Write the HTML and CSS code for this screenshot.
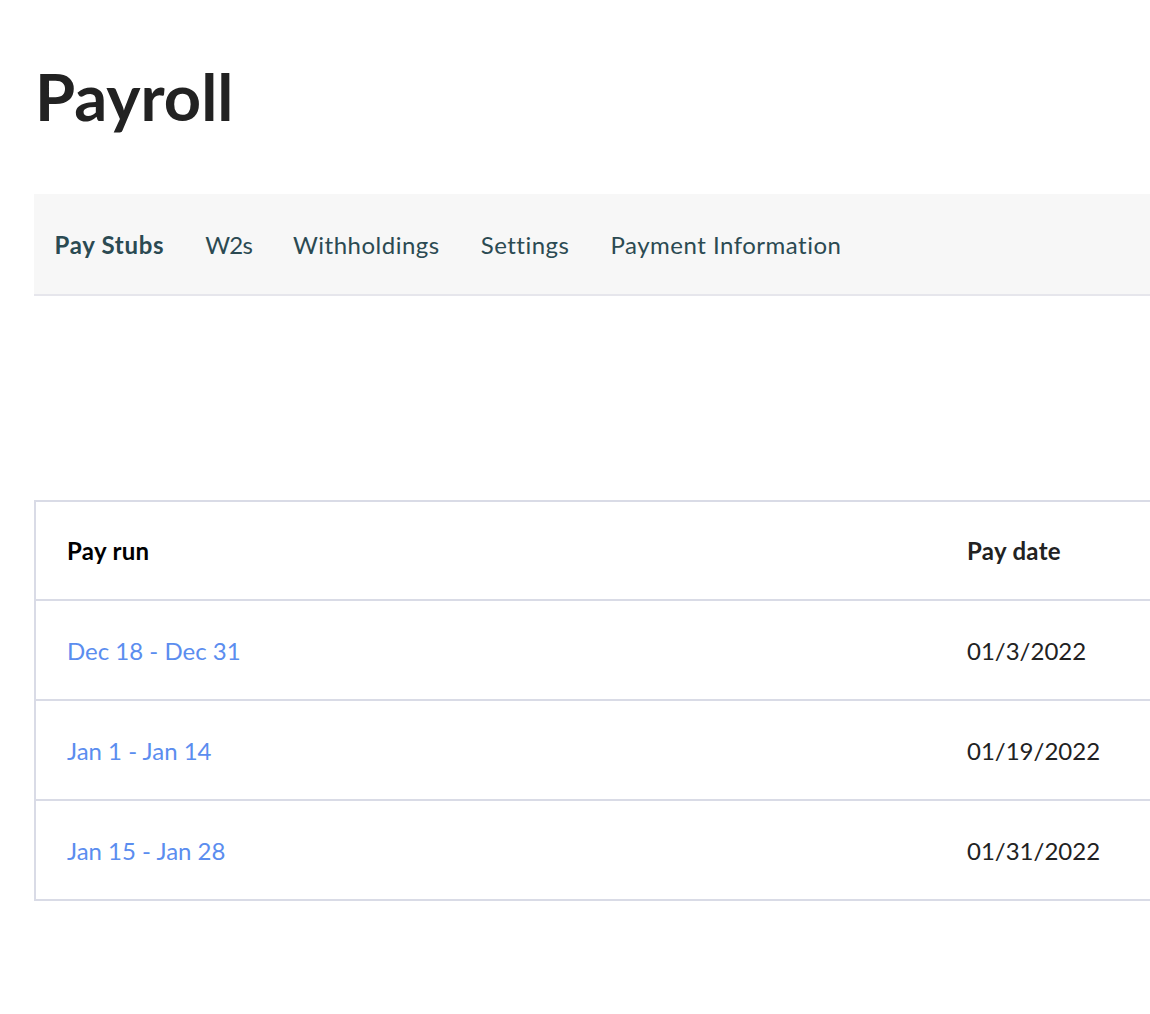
FILE: index.html
```html
<!DOCTYPE html>
<html lang="en">
<head>
<meta charset="utf-8">
<title>Payroll</title>
<link rel="stylesheet" href="styles.css">
</head>
<body>
<main class="page">
  <h1 class="title">Payroll</h1>
  <nav class="tabs">
    <a class="tab active" href="#">Pay Stubs</a>
    <a class="tab tight" href="#">W2s</a>
    <a class="tab" href="#">Withholdings</a>
    <a class="tab" href="#">Settings</a>
    <a class="tab" href="#">Payment Information</a>
  </nav>
  <section class="table">
    <div class="row head">
      <div class="cell run">Pay run</div>
      <div class="cell date">Pay date</div>
    </div>
    <div class="row">
      <div class="cell run"><a class="link" href="#">Dec 18 - Dec 31</a></div>
      <div class="cell date">01/3/2022</div>
    </div>
    <div class="row">
      <div class="cell run"><a class="link" href="#">Jan 1 - Jan 14</a></div>
      <div class="cell date">01/19/2022</div>
    </div>
    <div class="row">
      <div class="cell run"><a class="link" href="#">Jan 15 - Jan 28</a></div>
      <div class="cell date">01/31/2022</div>
    </div>
  </section>
</main>
</body>
</html>
```
FILE: styles.css
```css
html, body {
  margin: 0;
  padding: 0;
  background: #fff;
  overflow: hidden;
}
body {
  font-family: Lato, "Liberation Sans", sans-serif;
  color: #222;
}
.page {
  padding-left: 34px;
}
.title {
  margin: 0;
  padding-top: 64px;
  padding-left: 1px;
  height: 194px;
  box-sizing: border-box;
  font-size: 65px;
  line-height: 64px;
  font-weight: 700;
  color: #222;
}
.tabs {
  display: flex;
  align-items: center;
  height: 100px;
  background: #f7f7f7;
  border-bottom: 2px solid #e6e6ec;
}
.tab {
  padding: 0 20.5px;
  font-size: 24px;
  letter-spacing: 0.5px;
  color: #2b4a52;
  text-decoration: none;
}
.tab.tight {
  letter-spacing: -0.8px;
}
.tab.active {
  font-weight: 700;
  letter-spacing: 0.7px;
}
.table {
  margin-top: 204px;
  border-top: 2px solid #d9dbe6;
}
.row {
  display: flex;
  align-items: center;
  height: 98px;
  border-left: 2px solid #d9dbe6;
  border-bottom: 2px solid #d9dbe6;
}
.head {
  height: 97px;
}
.cell {
  font-size: 24px;
  padding-left: 31px;
}
.run {
  width: 900px;
  flex: none;
  box-sizing: border-box;
}
.date {
  color: #222;
}
.head .cell {
  font-weight: 700;
  letter-spacing: 0.3px;
}
.head .run {
  color: #000;
}
.link {
  color: #5b8def;
  text-decoration: none;
}
```
